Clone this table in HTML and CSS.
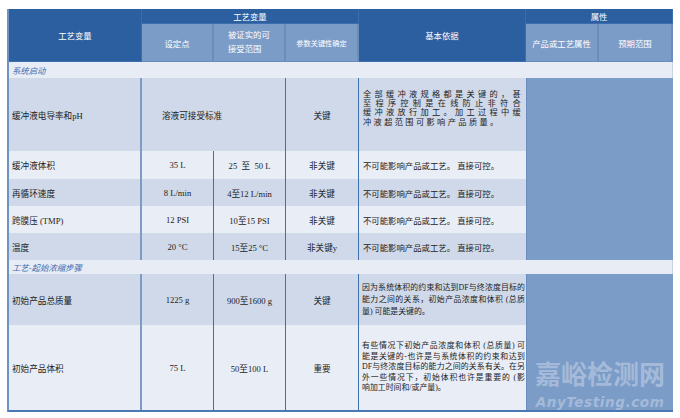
FILE: index.html
```html
<!DOCTYPE html>
<html lang="zh">
<head>
<meta charset="utf-8">
<link rel="stylesheet" href="styles.css">
</head>
<body>
<div class="wrap">
<table class="spec">
  <colgroup>
    <col class="c1"><col class="c2"><col class="c3"><col class="c4"><col class="c5"><col class="c6"><col class="c7">
  </colgroup>
  <tr class="h1">
    <th class="dark left-col" rowspan="2">工艺变量</th>
    <th class="dark" colspan="3">工艺变量</th>
    <th class="dark" rowspan="2">基本依据</th>
    <th class="dark" colspan="2">属性</th>
  </tr>
  <tr class="h2">
    <th class="light">设定点</th>
    <th class="light two">被证实的可<br>接受范围</th>
    <th class="light small">参数关键性确定</th>
    <th class="light">产品或工艺属性</th>
    <th class="light">预期范围</th>
  </tr>
  <tr class="sec sec1">
    <td colspan="7" class="sectitle">系统启动</td>
  </tr>
  <tr class="r-tall shade">
    <td class="name">缓冲液电导率和pH</td>
    <td colspan="2" class="merged">溶液可接受标准</td>
    <td class="ctr">关键</td>
    <td class="basis spaced">
      <div class="jl">全部缓冲液规格都是关键的，甚</div>
      <div class="jl">至程序控制是在线防止非符合</div>
      <div class="jl">缓冲液放行加工。加工过程中缓</div>
      <div>冲液超范围可影响产品质量。</div>
    </td>
    <td class="attr" colspan="2" rowspan="5"></td>
  </tr>
  <tr class="r-28 pale">
    <td class="name">缓冲液体积</td>
    <td class="ctr">35 L</td>
    <td class="ctr">25&nbsp; 至&nbsp; 50 L</td>
    <td class="ctr">非关键</td>
    <td class="basis">不可能影响产品或工艺。 直接可控。</td>
  </tr>
  <tr class="r-27 shade">
    <td class="name">再循环速度</td>
    <td class="ctr">8 L/min</td>
    <td class="ctr">4至12 L/min</td>
    <td class="ctr">非关键</td>
    <td class="basis">不可能影响产品或工艺。 直接可控。</td>
  </tr>
  <tr class="r-27 pale">
    <td class="name">跨膜压 (TMP)</td>
    <td class="ctr">12 PSI</td>
    <td class="ctr">10至15 PSI</td>
    <td class="ctr">非关键</td>
    <td class="basis">不可能影响产品或工艺。 直接可控。</td>
  </tr>
  <tr class="r-27 shade">
    <td class="name">温度</td>
    <td class="ctr">20 °C</td>
    <td class="ctr">15至25 °C</td>
    <td class="ctr">非关键y</td>
    <td class="basis">不可能影响产品或工艺。 直接可控。</td>
  </tr>
  <tr class="sec sec2">
    <td colspan="7" class="sectitle">工艺-起始浓缩步骤</td>
  </tr>
  <tr class="r-51 shade">
    <td class="name">初始产品总质量</td>
    <td class="ctr">1225 g</td>
    <td class="ctr">900至1600 g</td>
    <td class="ctr">关键</td>
    <td class="basis para p12">
      <div class="jl">因为系统体积的约束和达到DF与终浓度目标的</div>
      <div class="jl">能力之间的关系，初始产品浓度和体积 (总质</div>
      <div>量) 可能是关键的。</div>
    </td>
    <td class="attr" colspan="2" rowspan="2"></td>
  </tr>
  <tr class="r-85 pale last">
    <td class="name">初始产品体积</td>
    <td class="ctr">75 L</td>
    <td class="ctr">50至100 L</td>
    <td class="ctr">重要</td>
    <td class="basis para p10">
      <div class="jl">有些情况下初始产品浓度和体积 (总质量) 可</div>
      <div class="jl">能是关键的-也许是与系统体积的约束和达到</div>
      <div class="jl">DF与终浓度目标的能力之间的关系有关。在另</div>
      <div class="jl">外一些情况下，初始体积也许是重要的 (影</div>
      <div>响加工时间和/或产量)。</div>
    </td>
  </tr>
</table>
<div class="watermark">
  <div class="wm-cn">嘉峪检测网</div>
  <div class="wm-en">AnyTesting.com</div>
</div>
</div>
</body>
</html>
```

FILE: styles.css
```css
html, body {
  margin: 0;
  padding: 0;
  background: #ffffff;
}

body {
  font-family: "Liberation Serif", "Noto Sans CJK SC", serif;
  color: #1c1c1c;
}

.wrap {
  position: relative;
  padding: 9px 0 0 7px;
  width: 666px;
}

.spec {
  border-collapse: separate;
  border-spacing: 0;
  table-layout: fixed;
  width: 666px;
  border-left: 2px solid #6f93c2;
  border-bottom: 2px solid #4a78b4;
  box-sizing: border-box;
}

.c1 { width: 133px; }
.c2 { width: 72px; }
.c3 { width: 72px; }
.c4 { width: 73px; }
.c5 { width: 167px; }
.c6 { width: 73px; }
.c7 { width: 74px; }

th, td {
  padding: 0;
  box-sizing: border-box;
  overflow: hidden;
}

th {
  color: #ffffff;
  font-weight: normal;
  font-size: 8.4px;
  text-align: center;
  vertical-align: middle;
}

.h1 { height: 15px; }
.h2 { height: 38px; }

th.dark {
  background: #2c5f9f;
  border-right: 1px solid #3d6eab;
  border-bottom: 1px solid #3d6eab;
}

th.light {
  background: #7c9cc8;
  border-right: 2px solid #6a8dbd;
  border-bottom: 1px solid #6a8dbd;
}

th.two {
  text-align: left;
  padding-left: 14px;
  line-height: 14px;
}

th.small {
  font-size: 7.2px;
}

.sec td {
  background: #e8ecf5;
  border-right: 1px solid #c9d3e5;
}

.sec1 { height: 16px; }
.sec2 { height: 14px; }

.sectitle {
  font-style: italic;
  color: #3c6db0;
  font-size: 8.4px;
  padding-left: 3px;
  vertical-align: middle;
}

.shade td { background: #cfd9e9; }
.pale td { background: #e9edf6; }

td {
  font-size: 8.6px;
  vertical-align: middle;
}

td.name {
  padding-left: 3px;
  border-right: 2px solid #7b9cc7;
}

td.ctr {
  text-align: center;
  border-right: 1px solid #3f70b0;
}

td.merged {
  text-align: left;
  padding-left: 20px;
  border-right: 1px solid #3f70b0;
}

td.basis {
  padding-left: 4px;
  padding-right: 3px;
  font-size: 8.4px;
}

td.spaced {
  vertical-align: top;
  padding-top: 12px;
  letter-spacing: 2.4px;
  line-height: 9.2px;
  font-size: 8.2px;
}

td.para {
  font-size: 7.9px;
  padding-left: 3px;
  padding-right: 1px;
}

td.p12 { line-height: 12px; }
td.p10 { line-height: 10.5px; }

.jl {
  text-align: justify;
  text-align-last: justify;
}

td.attr {
  background: #7b9cc7 !important;
  border-left: 1px solid #6a8dbd;
}

.r-tall { height: 73px; }
.r-28 { height: 28px; }
.r-27 { height: 27px; }
.r-51 { height: 51px; }
.r-85 { height: 85px; }

.watermark {
  position: absolute;
  left: 530px;
  top: 360px;
  width: 140px;
  color: rgba(255, 255, 255, 0.32);
  text-align: center;
  pointer-events: none;
}

.wm-cn {
  font-family: "Noto Sans CJK SC", sans-serif;
  font-weight: bold;
  font-size: 26px;
  line-height: 26px;
}

.wm-en {
  font-family: "DejaVu Sans", sans-serif;
  font-style: italic;
  font-weight: bold;
  font-size: 13.5px;
  line-height: 16px;
  margin-top: 8px;
  letter-spacing: 0.6px;
}
```
